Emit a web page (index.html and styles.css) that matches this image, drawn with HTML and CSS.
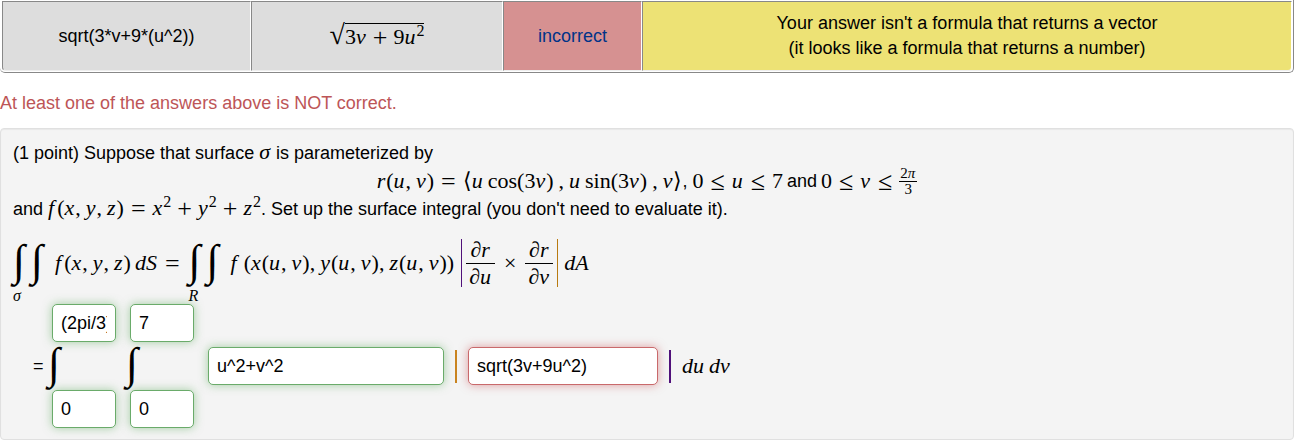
FILE: index.html
```html
<!DOCTYPE html>
<html lang="en">
<head>
<meta charset="utf-8">
<title>Surface integral</title>
<link rel="stylesheet" href="styles.css">
</head>
<body>
<table class="results">
  <tr>
    <td class="entered">sqrt(3*v+9*(u^2))</td>
    <td class="preview"><span class="math"><span class="radical">√</span><span class="radicand">3<i>v</i><span class="bin">+</span>9<i>u</i><sup>2</sup></span></span></td>
    <td class="verdict"><a class="link" href="#AnSwEr">incorrect</a></td>
    <td class="message">Your answer isn't a formula that returns a vector<br>(it looks like a formula that returns a number)</td>
  </tr>
</table>

<p class="alert">At least one of the answers above is NOT correct.</p>

<main class="problem">
  <p class="line">(1 point) Suppose that surface <span class="math"><i>σ</i></span> is parameterized by</p>
  <div class="display">
    <span class="math"><i>r</i>(<i>u</i><span class="comma">,</span><i>v</i>)<span class="rel">=</span>⟨<i>u</i><span class="fn">cos</span>(3<i>v</i>)<span class="comma wide">,</span><i>u</i><span class="fn">sin</span>(3<i>v</i>)<span class="comma wide">,</span><i>v</i>⟩</span><span class="pause">,</span>
    <span class="math">0<span class="rel">≤</span><i>u</i><span class="rel">≤</span>7</span><span class="word">and</span><span class="math">0<span class="rel">≤</span><i>v</i><span class="rel">≤</span></span>
    <span class="math frac small"><span class="num">2<i>π</i></span><span>3</span></span>
  </div>
  <p class="line">and <span class="math"><i>f</i><span class="thin">(</span><i>x</i><span class="comma">,</span><i>y</i><span class="comma">,</span><i>z</i>)<span class="rel">=</span><i>x</i><sup>2</sup><span class="bin">+</span><i>y</i><sup>2</sup><span class="bin">+</span><i>z</i><sup>2</sup></span>. Set up the surface integral (you don't need to evaluate it).</p>

  <div class="equation">
    <span class="domain"><span class="signs"><span class="int">∫</span><span class="int">∫</span></span><span class="region math"><i>σ</i></span></span>
    <span class="math"><i>f</i><span class="thin">(</span><i>x</i><span class="comma">,</span><i>y</i><span class="comma">,</span><i>z</i>)<i class="diff">dS</i><span class="rel">=</span></span>
    <span class="domain"><span class="signs"><span class="int">∫</span><span class="int">∫</span></span><span class="region math"><i>R</i></span></span>
    <span class="math"><i>f</i><span class="wideparen">(</span><i>x</i>(<i>u</i><span class="comma">,</span><i>v</i>)<span class="comma">,</span><i>y</i>(<i>u</i><span class="comma">,</span><i>v</i>)<span class="comma">,</span><i>z</i>(<i>u</i><span class="comma">,</span><i>v</i>))</span>
    <span class="norm math"><span class="frac"><span class="num">∂<i>r</i></span><span>∂<i>u</i></span></span><span class="times">×</span><span class="frac"><span class="num">∂<i>r</i></span><span>∂<i>v</i></span></span></span>
    <span class="math"><i>dA</i></span>
  </div>

  <form class="answers">
    <span class="equals">=</span>
    <span class="limits"><input class="box right" type="text" value="(2pi/3)" aria-label="Outer upper limit"><span class="int">∫</span><input class="box right" type="text" value="0" aria-label="Outer lower limit"></span>
    <span class="limits"><input class="box right" type="text" value="7" aria-label="Inner upper limit"><span class="int">∫</span><input class="box right" type="text" value="0" aria-label="Inner lower limit"></span>
    <input class="box right integrand" type="text" value="u^2+v^2" aria-label="Integrand">
    <span class="bar orange"></span>
    <input class="box wrong" type="text" value="sqrt(3v+9u^2)" aria-label="Norm of the cross product">
    <span class="bar violet"></span>
    <span class="math"><i>du</i><i class="diff">dv</i></span>
  </form>
</main>
</body>
</html>
```
FILE: styles.css
```css
* { box-sizing: border-box; }

body {
  margin: 0 8px 0 0;
  background: #fff;
  color: #000;
  font: 18px/25px "Liberation Sans", Arial, sans-serif;
}

p { margin: 0; }

/* Results table */
.results {
  width: 100%;
  table-layout: fixed;
  border-collapse: separate;
  border-spacing: 0;
  padding: 1px 1px 1px 2px;
  border: solid #888;
  border-width: 0 1px 1px 0;
  border-radius: 0 0 5px 5px;
}
.results td {
  height: 70px;
  padding: 0 8px;
  text-align: center;
  vertical-align: middle;
  border: 1px solid #888;
  border-right-color: #fff;
  border-bottom-color: #eee;
}
.results td:first-child { border-bottom-left-radius: 4px; }
.results td:last-child { border-bottom-right-radius: 4px; }
.results .preview { width: 252px; padding-top: 4px; background: #ddd; }
.entered { width: 249px; background: #ddd; }
.verdict { width: 139px; background: #d69191; }
.message { background: #ede275; }
.link { color: #038; text-decoration: none; }

.alert { padding: 18px 0 12px; color: #bd5557; }

/* Problem panel */
.problem {
  padding: 11px 12px;
  background: #f4f4f4;
  border: 1px solid #e0e0e0;
  border-radius: 4px;
  box-shadow: inset 0 1px 1px rgba(0, 0, 0, .05);
}
.line { line-height: 25px; }
.display {
  display: flex;
  justify-content: center;
  align-items: center;
  height: 30px;
}

/* Mathematics */
.math {
  font-family: "Liberation Serif", "Times New Roman", serif;
  font-size: 22px;
  line-height: 24px;
  white-space: nowrap;
}
.math i { margin-right: 1px; }
.math sup { font-size: 16px; line-height: 0; vertical-align: 8px; }
.comma { margin-right: 5px; }
.wide { margin-left: 5px; }
.fn { margin-left: 4px; }
.thin { margin-left: 2px; }
.wideparen { margin-left: 6px; }
.math .diff { margin-left: 4px; }
.rel, .bin { font-size: 26px; line-height: 0; vertical-align: -2px; }
.rel { margin: 0 7px; }
.bin { margin: 0 6px; }
.pause { margin-right: 5px; }
.word { margin: 0 4px; }
.radical { font-size: 28px; line-height: 0; }
.radicand { border-top: 1px solid #000; }
.frac { display: inline-flex; flex-direction: column; align-items: stretch; text-align: center; }
.frac > span { padding: 0 3px; line-height: 26px; }
.frac > .num { border-bottom: 1px solid #000; }
.small { font-size: 15px; }
.small > span { padding: 0 1px; line-height: 15px; }

.equation { display: flex; align-items: center; gap: 2px; height: 82px; }
.domain { display: flex; flex-direction: column; padding-top: 18px; margin-right: 4px; }
.signs { display: flex; }
.int {
  width: 18px;
  height: 48px;
  font: italic 44px/44px "Liberation Serif", serif;
}
.region { font-size: 16px; line-height: 18px; }
.norm {
  display: flex;
  align-items: center;
  gap: 9px;
  margin: 0 4px 0 5px;
  padding: 0 4px;
  border-left: 1px solid #50107a;
  border-right: 1px solid #b87a10;
  height: 48px;
}

/* Answer fields */
.answers { display: flex; align-items: center; padding-left: 20px; }
.equals { width: 15px; }
.limits { display: flex; flex-direction: column; margin-right: 10px; }
.limits .box { width: 64px; margin-left: 4px; }
.box {
  width: 190px;
  height: 38px;
  padding: 0 8px;
  color: #000;
  background: #fff;
  border: 1px solid;
  border-radius: 5px;
  font: 18px/25px "Liberation Sans", Arial, sans-serif;
}
.right { border-color: #6aab6a; box-shadow: 0 0 10px rgba(80, 165, 80, .5); }
.wrong { border-color: #c9696b; box-shadow: 0 0 10px rgba(200, 70, 75, .5); }
.integrand { width: 236px; margin-left: 4px; }
.bar { width: 2px; height: 33px; margin: 0 11px; }
.orange { background: #c98420; }
.violet { background: #50107a; }
```
